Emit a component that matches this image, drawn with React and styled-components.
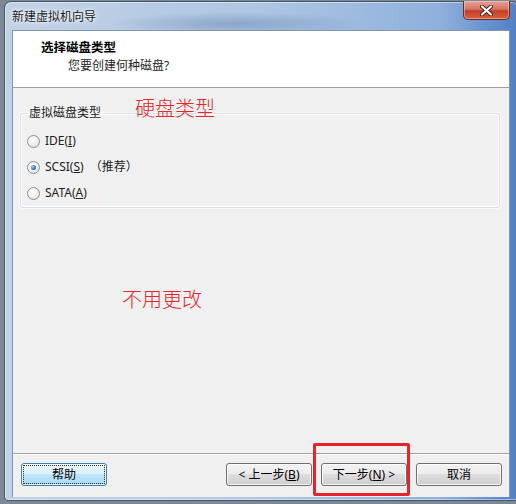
import React from 'react'
import styled, { createGlobalStyle } from 'styled-components'

const GlobalStyle = createGlobalStyle`
    body {
        margin: 0;
        background: #7d8897;
        font-family: "Noto Sans", "Noto Sans CJK SC", sans-serif;
    }
`;

function RadioOption({ checked, children, note }) {
    return (
        <OptionRow>
            <RadioCircle checked={checked} />
            <OptionLabel>{children}</OptionLabel>
            {note && <OptionNote>{note}</OptionNote>}
        </OptionRow>
    )
}

// white cross with a dark rim, as on the Aero close button
function CloseGlyph() {
    return (
        <svg width="13" height="11" viewBox="0 0 13 11">
            <path d="M2 1.5 L11 9.5 M11 1.5 L2 9.5" stroke="#4a1c14" strokeWidth="4" strokeLinecap="round" />
            <path d="M2 1.5 L11 9.5 M11 1.5 L2 9.5" stroke="#ffffff" strokeWidth="2.2" strokeLinecap="round" />
        </svg>
    )
}

function App() {
    return (
        <Screen>
            <GlobalStyle />
            <Window>
                <TitleBar>
                    <TitleText>新建虚拟机向导</TitleText>
                    <CloseButton><CloseGlyph /></CloseButton>
                </TitleBar>

                <Panel>
                    <Header>
                        <HeaderTitle>选择磁盘类型</HeaderTitle>
                        <HeaderSub>您要创建何种磁盘?</HeaderSub>
                    </Header>

                    <Body>
                        <GroupBox>
                            <GroupLegend>虚拟磁盘类型</GroupLegend>
                            <RadioOption>IDE(<u>I</u>)</RadioOption>
                            <RadioOption checked note="（推荐）">SCSI(<u>S</u>)</RadioOption>
                            <RadioOption>SATA(<u>A</u>)</RadioOption>
                        </GroupBox>
                    </Body>

                    <Footer>
                        <Button primary>帮助</Button>
                        <Spacer />
                        <Button>&lt; 上一步(<u>B</u>)</Button>
                        <Button>下一步(<u>N</u>) &gt;</Button>
                        <Button>取消</Button>
                    </Footer>
                </Panel>
            </Window>

            <Note top={96} left={135}>硬盘类型</Note>
            <Note top={287} left={122}>不用更改</Note>
            <Highlight />
        </Screen>
    )
}

const Screen = styled.div`
    position: relative;
    width: 516px;
    height: 504px;
    overflow: hidden;
    background: #7d8897;
`;

const Window = styled.div`
    margin: 1px 0 0 4px;
    width: 515px;
    height: 500px;
    box-sizing: border-box;
    border: 1px solid #46566b;
    border-radius: 7px 7px 4px 4px;
    padding: 0 0 3px 7px;
    display: flex;
    flex-direction: column;
    background:
        radial-gradient(ellipse 130px 12px at 230px 22px, rgba(70, 100, 150, 0.35), transparent),
        linear-gradient(90deg, #c2d2e5 0%, #aec6e3 50%, #8fb0dc 85%, #4f7fc4 100%);
    box-shadow: inset 0 0 0 1px rgba(255, 255, 255, 0.45);
`;

const TitleBar = styled.div`
    height: 28px;
    display: flex;
    justify-content: space-between;
    align-items: flex-start;
    padding-right: 8px;
`;

const TitleText = styled.span`
    margin-top: 7px;
    font-size: 12px;
    line-height: 15px;
    color: #1b1b1b;
    text-shadow: 0 0 6px rgba(255, 255, 255, 0.95), 0 0 3px rgba(255, 255, 255, 0.9);
`;

const CloseButton = styled.div`
    margin-top: -1px;
    width: 47px;
    height: 19px;
    box-sizing: border-box;
    border: 1px solid #6b2e26;
    border-top: none;
    border-radius: 0 0 5px 5px;
    background: linear-gradient(#e4a394 0%, #d77563 45%, #c23f28 55%, #d6623e 100%);
    box-shadow: inset 0 0 0 1px rgba(255, 220, 210, 0.45);
    display: flex;
    align-items: center;
    justify-content: center;
`;

const Panel = styled.div`
    width: 498px;
    flex: 1;
    box-sizing: border-box;
    border: 1px solid #7f95b3;
    border-bottom: none;
    background: #f0f0f0;
    display: flex;
    flex-direction: column;
`;

const Header = styled.div`
    height: 57px;
    box-sizing: border-box;
    padding: 8px 0 0 28px;
    background: #ffffff;
    border-bottom: 1px solid #a0a0a0;
`;

const HeaderTitle = styled.div`
    font-family: "Noto Sans CJK SC", sans-serif;
    font-size: 12.5px;
    font-weight: 700;
    line-height: 15px;
    color: #000;
`;

const HeaderSub = styled.div`
    margin: 5px 0 0 27px;
    font-size: 12px;
    line-height: 14px;
    color: #1e1e1e;
`;

const Body = styled.div`
    flex: 1;
    padding: 18px 9px 0 7px;
`;

const GroupBox = styled.fieldset`
    margin: 0;
    padding: 11px 6px 4px 6px;
    border: 1px solid #d5dfe5;
    border-radius: 3px;
    box-shadow: inset 0 0 0 1px #ffffff, 0 0 0 1px rgba(255, 255, 255, 0.6);
    display: flex;
    flex-direction: column;
    gap: 6px;
`;

const GroupLegend = styled.legend`
    padding: 0 2px;
    font-size: 12px;
    line-height: 14px;
    color: #1e1e1e;
`;

const OptionRow = styled.label`
    height: 20px;
    display: flex;
    align-items: center;
    font-size: 12px;
    color: #1e1e1e;
`;

const RadioCircle = styled.span`
    position: relative;
    width: 13px;
    height: 13px;
    box-sizing: border-box;
    border-radius: 50%;
    border: 1px solid #8f8f8f;
    background: radial-gradient(circle at 40% 35%, #ffffff 0%, #f1f1f1 45%, #d6d6d6 100%);
    margin-right: 5px;

    &::after {
        content: "";
        display: ${p => (p.checked ? 'block' : 'none')};
        position: absolute;
        left: 3px;
        top: 3px;
        width: 5px;
        height: 5px;
        border-radius: 50%;
        background: radial-gradient(circle at 35% 35%, #9fd4f6 0%, #2f78b8 55%, #174d80 100%);
    }
`;

const OptionLabel = styled.span`
    line-height: 14px;
`;

const OptionNote = styled.span`
    margin-left: 6px;
    line-height: 14px;
`;

const Footer = styled.div`
    height: 44px;
    box-sizing: border-box;
    padding: 9px 7px 0 8px;
    border-top: 1px solid #a0a0a0;
    box-shadow: inset 0 1px 0 #ffffff;
    display: flex;
    align-items: flex-start;
    gap: 9px;
`;

const Spacer = styled.div`
    flex: 1;
`;

const Button = styled.div`
    width: 86px;
    height: 23px;
    box-sizing: border-box;
    border: 1px solid ${p => (p.primary ? '#3c7fb1' : '#707070')};
    border-radius: 3px;
    background: ${p => p.primary
        ? 'linear-gradient(#eaf6fd 0%, #d9f0fc 50%, #bee6fd 50%, #a7d9f5 100%)'
        : 'linear-gradient(#f2f2f2 0%, #ebebeb 50%, #dddddd 50%, #cfcfcf 100%)'};
    box-shadow: inset 0 0 0 1px rgba(255, 255, 255, 0.75);
    outline: ${p => (p.primary ? '1px dotted #2b2b2b' : 'none')};
    outline-offset: -3px;
    font-size: 12px;
    line-height: 21px;
    color: #000;
    text-align: center;
    white-space: nowrap;
`;

const Note = styled.div`
    position: absolute;
    top: ${p => p.top}px;
    left: ${p => p.left}px;
    font-family: "Noto Sans CJK SC", sans-serif;
    font-size: 20px;
    font-weight: 300;
    line-height: 24px;
    color: #e8232b;
`;

const Highlight = styled.div`
    position: absolute;
    left: 313px;
    top: 443px;
    width: 97px;
    height: 53px;
    box-sizing: border-box;
    border: 3px solid #e8232b;
    border-radius: 2px;
`;

export default App
